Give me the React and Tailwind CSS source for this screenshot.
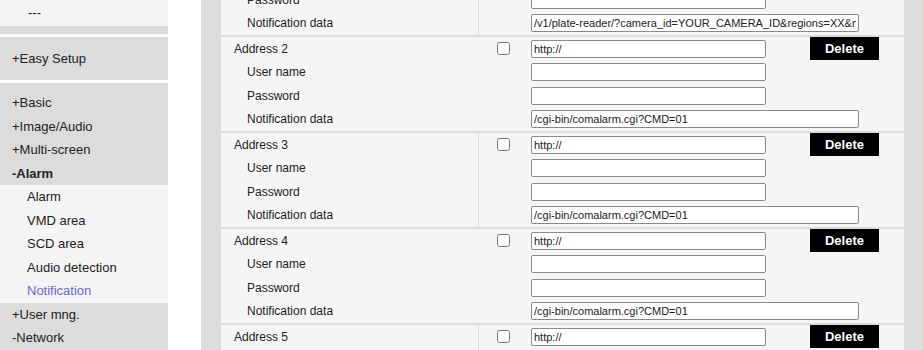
import React from "react";

const font = { fontFamily: '"Liberation Sans", Arial, Helvetica, sans-serif' };

const rows = [
  { n: 1, url: "http://", data: "/v1/plate-reader/?camera_id=YOUR_CAMERA_ID&regions=XX&mmc=true" },
  { n: 2, url: "http://", data: "/cgi-bin/comalarm.cgi?CMD=01" },
  { n: 3, url: "http://", data: "/cgi-bin/comalarm.cgi?CMD=01" },
  { n: 4, url: "http://", data: "/cgi-bin/comalarm.cgi?CMD=01" },
  { n: 5, url: "http://", data: "/cgi-bin/comalarm.cgi?CMD=01" },
];

function Field({ value, wide }) {
  return (
    <input
      type="text"
      defaultValue={value}
      className={`${wide ? "w-[328px]" : "w-[235px]"} h-[18px] bg-white border border-[#8a8a8a] rounded-[2px] px-[2px] text-[11px] text-[#222] outline-none`}
      style={font}
    />
  );
}

function AddressRow({ row }) {
  const odd = row.n % 2 === 1;
  const labelCls = `w-[258px] h-full flex items-center ${odd ? "border-r border-[#dedede]" : ""}`;
  return (
    <div className="border-b-2 border-[#dcdcdc]">
      <div className="flex items-center h-[23.5px]">
        <div className={`${labelCls} pl-[13px]`}>Address {row.n}</div>
        <div className="w-[52px] flex items-center">
          <input type="checkbox" className="ml-[18px] w-[13px] h-[13px] m-0" />
        </div>
        <Field value={row.url} />
        <button className="ml-[44px] w-[69px] h-[23px] bg-black text-white font-bold text-[13px]" style={font}>
          Delete
        </button>
      </div>
      <div className="flex items-center h-[23.5px]">
        <div className={`${labelCls} pl-[26px]`}>User name</div>
        <div className="w-[52px]" />
        <Field value="" />
      </div>
      <div className="flex items-center h-[23.5px]">
        <div className={`${labelCls} pl-[26px]`}>Password</div>
        <div className="w-[52px]" />
        <Field value="" />
      </div>
      <div className="flex items-center h-[23.5px]">
        <div className={`${labelCls} pl-[26px]`}>Notification data</div>
        <div className="w-[52px]" />
        <Field value={row.data} wide />
      </div>
    </div>
  );
}

function NavItem({ children, sub, bold, active }) {
  return (
    <div
      className={`h-[23.5px] flex items-center ${sub ? "pl-[27px]" : "pl-[12px]"} ${bold ? "font-bold" : ""} ${active ? "text-[#6666d6]" : "text-[#222]"}`}
    >
      {children}
    </div>
  );
}

export default function App() {
  return (
    <div className="w-[923px] h-[350px] overflow-hidden flex bg-white" style={font}>
      {/* Sidebar */}
      <div className="w-[168px] shrink-0 text-[13px]">
        <div className="h-[26px] bg-[#f4f4f4] flex items-center pl-[28px] text-[#222]">---</div>
        <div className="h-[8px] bg-[#dcdcdc]" />
        <div className="h-[3px]" />
        <div className="h-[43px] bg-[#dcdcdc] flex items-center pl-[12px] text-[#222]">+Easy Setup</div>
        <div className="h-[3px]" />
        <div className="bg-[#dcdcdc] pt-[8px]">
          <NavItem>+Basic</NavItem>
          <NavItem>+Image/Audio</NavItem>
          <NavItem>+Multi-screen</NavItem>
          <NavItem bold>-Alarm</NavItem>
        </div>
        <div className="bg-[#f4f4f4]">
          <NavItem sub>Alarm</NavItem>
          <NavItem sub>VMD area</NavItem>
          <NavItem sub>SCD area</NavItem>
          <NavItem sub>Audio detection</NavItem>
          <NavItem sub active>Notification</NavItem>
        </div>
        <div className="bg-[#dcdcdc] h-[60px]">
          <NavItem>+User mng.</NavItem>
          <NavItem>-Network</NavItem>
        </div>
      </div>

      <div className="w-[33px] shrink-0" />

      {/* Main */}
      <div className="flex-1 bg-[#dddddd] pl-[20px] pr-[19px]">
        <div className="bg-[#f5f5f5] -mt-[59px] text-[12px] text-[#222]">
          {rows.map((r) => (
            <AddressRow key={r.n} row={r} />
          ))}
        </div>
      </div>
    </div>
  );
}
